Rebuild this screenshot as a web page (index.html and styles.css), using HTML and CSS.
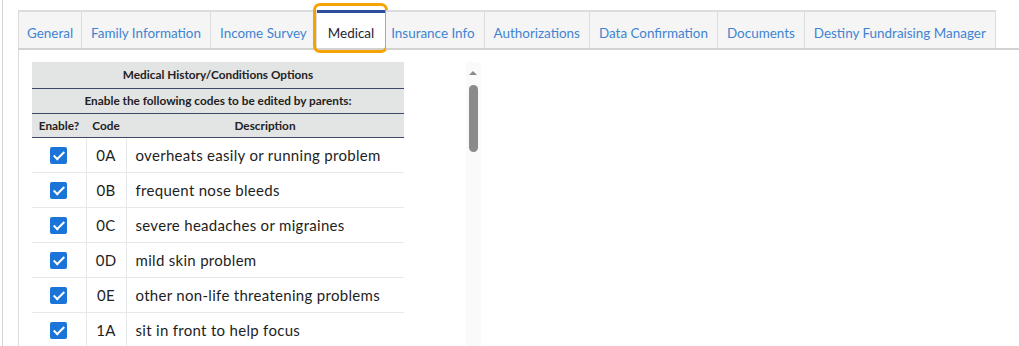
FILE: index.html
```html
<!DOCTYPE html>
<html lang="en">
<head>
  <meta charset="UTF-8">
  <title>Medical</title>
  <link rel="stylesheet" href="styles.css">
</head>
<body>
  <div class="page">
    <!-- Tab strip -->
    <ul class="tabs">
      <li class="tab">General</li>
      <li class="tab">Family Information</li>
      <li class="tab">Income Survey</li>
      <li class="tab active">Medical<span class="highlight"></span></li>
      <li class="tab">Insurance Info</li>
      <li class="tab">Authorizations</li>
      <li class="tab">Data Confirmation</li>
      <li class="tab">Documents</li>
      <li class="tab">Destiny Fundraising Manager</li>
    </ul>

    <!-- Tab content -->
    <div class="panel">
      <div class="scroller">
        <table class="codes">
          <thead>
            <tr class="title"><th colspan="3">Medical History/Conditions Options</th></tr>
            <tr><th colspan="3">Enable the following codes to be edited by parents:</th></tr>
            <tr class="cols">
              <th class="c-enable">Enable?</th>
              <th class="c-code">Code</th>
              <th>Description</th>
            </tr>
          </thead>
          <tbody>
            <tr><td class="c-enable"><span class="check"></span></td><td class="c-code">0A</td><td>overheats easily or running problem</td></tr>
            <tr><td class="c-enable"><span class="check"></span></td><td class="c-code">0B</td><td>frequent nose bleeds</td></tr>
            <tr><td class="c-enable"><span class="check"></span></td><td class="c-code">0C</td><td>severe headaches or migraines</td></tr>
            <tr><td class="c-enable"><span class="check"></span></td><td class="c-code">0D</td><td>mild skin problem</td></tr>
            <tr><td class="c-enable"><span class="check"></span></td><td class="c-code">0E</td><td>other non-life threatening problems</td></tr>
            <tr><td class="c-enable"><span class="check"></span></td><td class="c-code">1A</td><td>sit in front to help focus</td></tr>
          </tbody>
        </table>
        <div class="scrollbar">
          <span class="arrow"></span>
          <span class="thumb"></span>
        </div>
      </div>
    </div>
  </div>
</body>
</html>
```

FILE: styles.css
```css
/* === BASE === */
* {
  margin: 0;
  padding: 0;
  box-sizing: border-box;
}
body {
  font-family: Lato, "Noto Sans", sans-serif;
  background: #fff;
  color: #222;
  height: 346px;
  overflow: hidden;
}
.page {
  margin-left: 2px;
  border-left: 1px solid #d4d4d4;
  padding-left: 15px;
  padding-top: 10px;
  height: 100%;
  background: #fff;
}

/* === TABS === */
.tabs {
  list-style: none;
  display: flex;
  border-bottom: 2px solid #d2d2d2;
}
.tab {
  position: relative;
  height: 40px;
  padding: 0 9px;
  line-height: 42px;
  font-size: 13.45px;
  color: #3f84d2;
  background: #f5f5f5;
  border-top: 2px solid #dcdcdc;
  border-right: 1px solid #dcdcdc;
  white-space: nowrap;
  margin-bottom: -2px;
  border-bottom: 2px solid #d2d2d2;
}
.tab:first-child {
  border-left: 1px solid #dcdcdc;
  padding: 0 8px;
}
.tab.active {
  background: #fff;
  color: #1e2430;
  border-top: 3px solid #2b4e9c;
  line-height: 41px;
  padding: 0 11px;
}
.tab.active + .tab {
  padding-left: 5px;
}
.highlight {
  position: absolute;
  left: -4px;
  right: -3px;
  top: -10px;
  bottom: -5px;
  border: 3px solid #f5a300;
  border-radius: 7px;
}

/* === PANEL === */
.panel {
  border-left: 1px solid #dcdcdc;
  padding: 12px 13px 0;
  height: 300px;
}
.scroller {
  display: flex;
  width: 449px;
  height: 290px;
}

/* === TABLE === */
.codes {
  width: 372px;
  border-collapse: collapse;
  align-self: flex-start;
}
.codes th {
  background: #e3e4e4;
  font-size: 11.8px;
  font-weight: 700;
  color: #222;
  height: 25px;
  border-bottom: 1px solid #3b4668;
  text-align: center;
}
.codes tr.title th {
  height: 26px;
}
.codes tr.cols th {
  height: 24px;
}
.codes td {
  height: 35px;
  font-size: 15px;
  border-bottom: 1px solid #e6e8ea;
  border-right: 1px solid #e6e8ea;
  padding-left: 9px;
  color: #1e1e1e;
  letter-spacing: 0.3px;
}
.codes td:last-child {
  border-right: none;
}
.codes .c-enable {
  width: 54px;
  text-align: center;
  padding: 0;
}
.codes .c-code {
  width: 40px;
  text-align: center;
  padding: 0;
}
.check {
  display: inline-block;
  position: relative;
  width: 17px;
  height: 17px;
  background: #1b74d8;
  border-radius: 2px;
  vertical-align: middle;
}
.check::after {
  content: "";
  position: absolute;
  left: 6px;
  top: 2px;
  width: 4px;
  height: 9px;
  border: solid #fff;
  border-width: 0 2.5px 2.5px 0;
  transform: rotate(45deg);
}

/* === SCROLLBAR === */
.scrollbar {
  margin-left: auto;
  width: 15px;
  background: #fafafa;
  position: relative;
}
.scrollbar .arrow {
  position: absolute;
  left: 3px;
  top: 9px;
  border: 4px solid transparent;
  border-bottom: 4px solid #8a8a8a;
  border-top: none;
}
.scrollbar .thumb {
  position: absolute;
  left: 3px;
  top: 23px;
  width: 9px;
  height: 67px;
  background: #8a8a8a;
  border-radius: 5px;
}
```
